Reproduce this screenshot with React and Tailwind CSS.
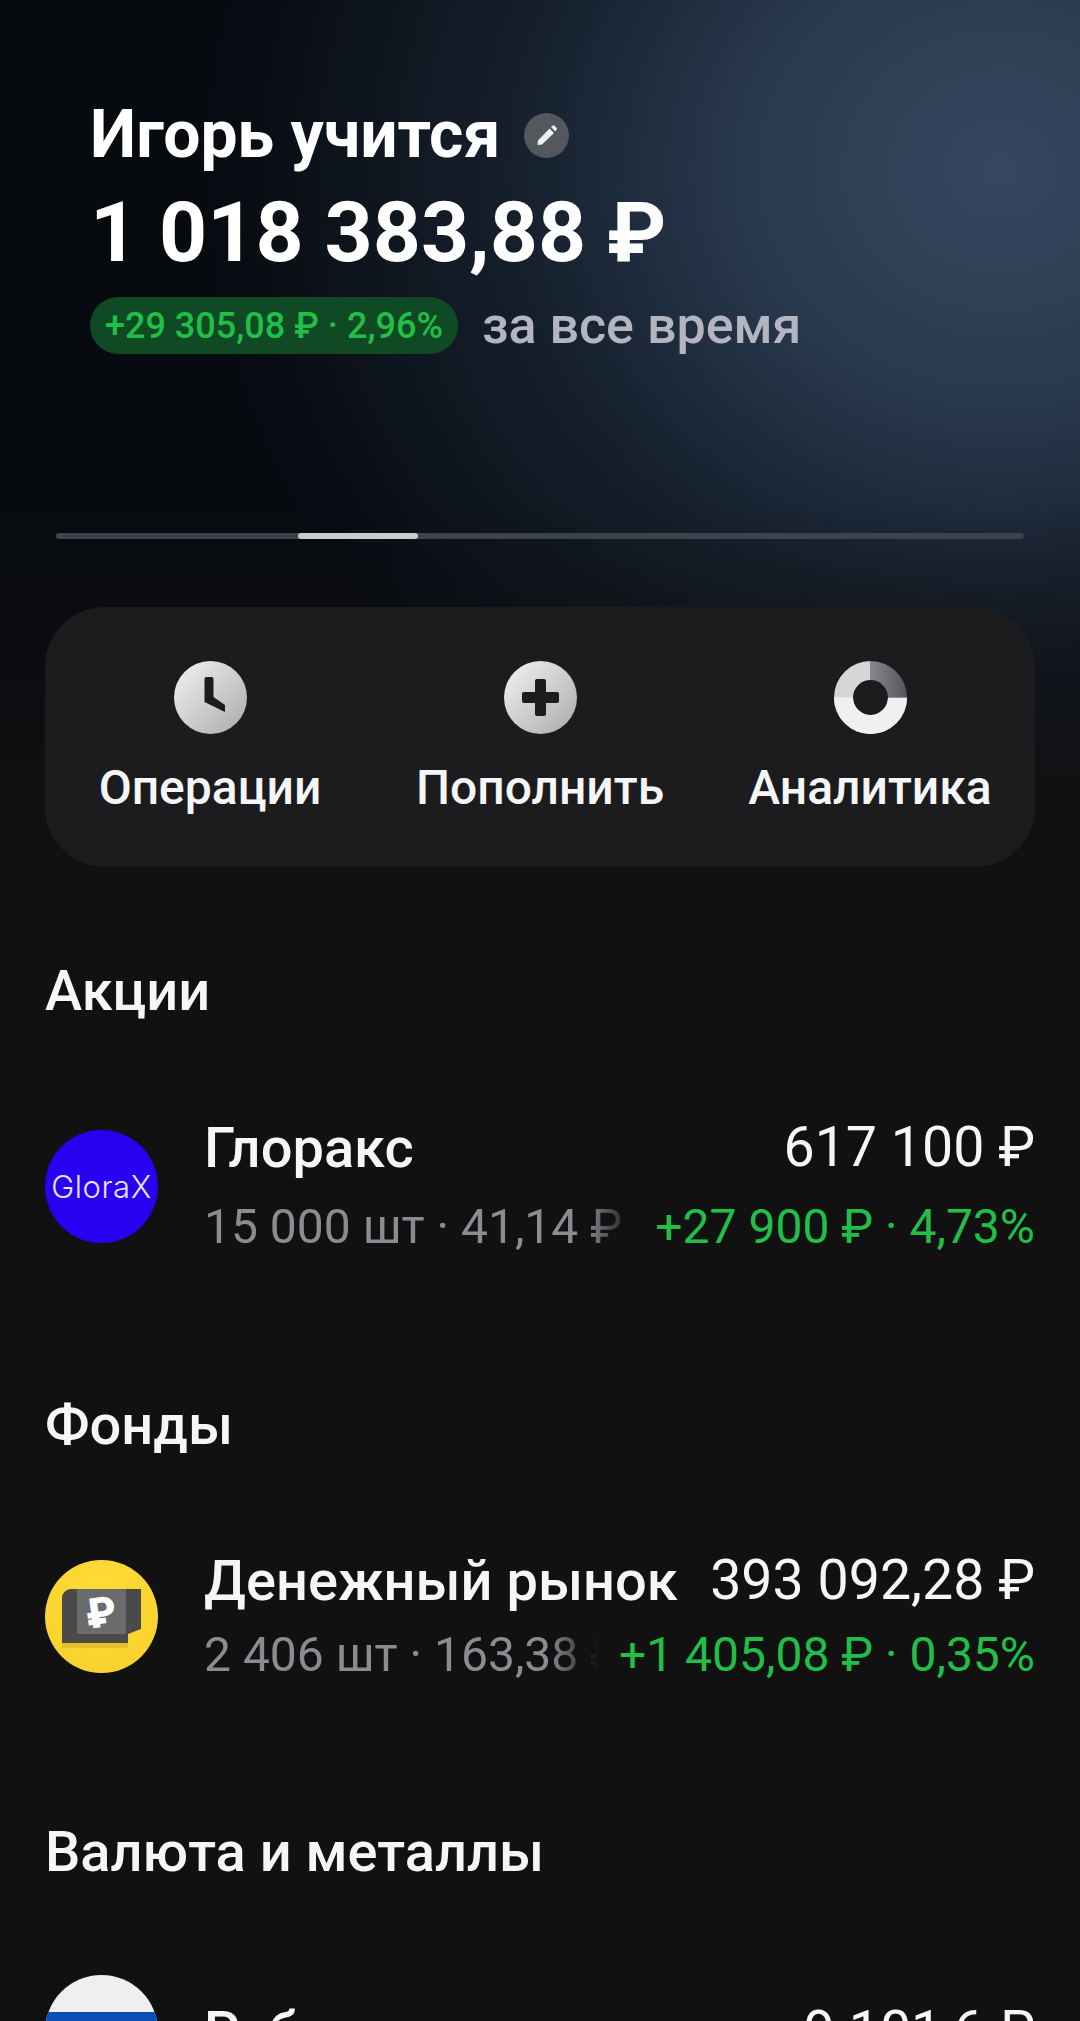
import React from 'react';

function PencilBadge() {
  return (
    <div className="w-[45px] h-[45px] rounded-full bg-[#54575e] flex items-center justify-center">
      <svg width="24" height="24" viewBox="0 0 24 24">
        <path d="M3 17.5 14.5 5.5l4.5 4.5L7 21.5l-4.6.6z" fill="#eceef0" />
        <path d="M16 4l1.5-1.2a1.5 1.5 0 0 1 2 0l2 2a1.5 1.5 0 0 1 0 2L20.400 8.500z" fill="#eceef0" />
      </svg>
    </div>
  );
}

function ClockIcon() {
  return (
    <svg width="73" height="73" viewBox="0 0 73 73">
      <defs>
        <linearGradient id="cg" x1="0" y1="0" x2="1" y2="1">
          <stop offset="0" stopColor="#f2f3f4" />
          <stop offset="1" stopColor="#a8aaad" />
        </linearGradient>
      </defs>
      <circle cx="36.5" cy="36.5" r="36.5" fill="url(#cg)" />
      <path d="M30.500 18q0-2 2-2h5q2 0 2 2v18l11.500 8v7l-20.500-10z" fill="#1c1c1e" />
    </svg>
  );
}

function PlusIcon() {
  return (
    <svg width="73" height="73" viewBox="0 0 73 73">
      <defs>
        <linearGradient id="pg" x1="0" y1="0" x2="1" y2="1">
          <stop offset="0" stopColor="#f2f3f4" />
          <stop offset="1" stopColor="#a8aaad" />
        </linearGradient>
      </defs>
      <circle cx="36.5" cy="36.5" r="36.5" fill="url(#pg)" />
      <rect x="31" y="18" width="11" height="37" rx="2" fill="#1c1c1e" />
      <rect x="18" y="31" width="37" height="11" rx="2" fill="#1c1c1e" />
    </svg>
  );
}

function DonutIcon() {
  return (
    <svg width="73" height="73" viewBox="0 0 73 73">
      <defs>
        <linearGradient id="dg" x1="0" y1="0" x2="1" y2="0">
          <stop offset="0" stopColor="#87888b" />
          <stop offset="1" stopColor="#55565a" />
        </linearGradient>
      </defs>
      <path d="M36.5 0A36.5 36.5 0 1 0 73 36.5H54A17.5 17.5 0 1 1 36.5 19z" fill="#d5d6d8" />
      <path d="M73 36.5A36.5 36.5 0 0 1 0 36.5h19a17.5 17.5 0 0 0 35 0z" fill="#eef0f1" />
      <path d="M36.5 0A36.5 36.5 0 0 1 73 36.5H54A17.5 17.5 0 0 0 36.5 19z" fill="url(#dg)" />
    </svg>
  );
}

function Action({ icon, label }) {
  return (
    <div className="flex flex-col items-center gap-[26px]">
      {icon}
      <div className="text-[48px] leading-[56px] font-medium text-[#f5f6f7] whitespace-nowrap">{label}</div>
    </div>
  );
}

function GloraxAvatar() {
  return (
    <div className="w-[113px] h-[113px] rounded-full bg-[#2a00f0] shrink-0 flex items-center justify-center">
      <span className="text-[31px] leading-none text-[#e8e4ff] tracking-[0.5px] font-light font-['Inter',sans-serif]">GloraX</span>
    </div>
  );
}

function FundAvatar() {
  return (
    <div className="w-[113px] h-[113px] rounded-full bg-[radial-gradient(circle_at_50%_30%,#ffdc38,#f8d02a)] shrink-0 relative overflow-hidden">
      <svg width="113" height="113" viewBox="0 0 113 113" className="absolute inset-0">
        <path d="M17 83h66v5H17z" fill="#b8931a" opacity="0.3" />
        <path d="M17 36q3-7 9-7H96V69l-13 5V83H17z" fill="#4a4a4a" />
        <rect x="32" y="29" width="49" height="45" fill="#6b6b6b" />
        <text x="56" y="67" textAnchor="middle" fontSize="42" fontWeight="900" fill="#fff" fontFamily="Roboto, sans-serif" transform="rotate(-8 56 52)">₽</text>
      </svg>
    </div>
  );
}

function RubAvatar() {
  return (
    <div className="w-[113px] h-[113px] rounded-full shrink-0 overflow-hidden bg-[#efefef]">
      <div className="h-[37px]" />
      <div className="h-[38px] bg-[#0a50b4]" />
      <div className="h-[38px] bg-[#d52b1e]" />
    </div>
  );
}

function AssetRow({ avatar, name, sub, price, delta, gapClass }) {
  return (
    <div className="flex items-center gap-[46px]">
      {avatar}
      <div className={`flex-1 min-w-0 flex flex-col ${gapClass}`}>
        <div className="flex justify-between gap-6 whitespace-nowrap">
          <span className="text-[56px] leading-[60px] font-medium text-[#f5f6f7]">{name}</span>
          <span className="text-[55.500px] leading-[60px] text-[#f5f6f7]">{price}</span>
        </div>
        {sub && (
          <div className="flex gap-[20px] whitespace-nowrap text-[48px] leading-[54px]">
            <span className="flex-1 min-w-0 overflow-hidden text-[#8b8c92] [mask-image:linear-gradient(to_left,transparent_0px,#000_50px)]">{sub}</span>
            <span className="text-[#21bf48] shrink-0">{delta}</span>
          </div>
        )}
      </div>
    </div>
  );
}

export default function App() {
  return (
    <div className="w-[1080px] h-[2021px] overflow-hidden bg-[#111112] font-['Roboto',sans-serif] bg-no-repeat bg-[linear-gradient(to_bottom,transparent_0px,transparent_500px,#111112_830px),radial-gradient(ellipse_800px_720px_at_1000px_170px,#35475f_0%,#2a3a50_30%,#151f2c_62%,#070a0f_100%)]">
      {/* hero */}
      <div className="pt-[93px] pl-[90px] pr-[56px]">
        <div className="flex items-center gap-[24px]">
          <h1 className="text-[66px] leading-[84px] font-bold text-white whitespace-nowrap">Игорь учится</h1>
          <PencilBadge />
        </div>
        <div className="text-[84px] leading-[100px] font-bold text-white mt-[6px] whitespace-nowrap">1 018 383,88 ₽</div>
        <div className="flex items-center gap-[24px] mt-[14px]">
          <span className="h-[57px] px-[15px] rounded-full bg-[#0f4a25] text-[#21bf48] text-[36px] font-medium flex items-center whitespace-nowrap">+29 305,08 ₽ · 2,96%</span>
          <span className="text-[52px] leading-[57px] font-medium text-[#b3b6c0] whitespace-nowrap">за все время</span>
        </div>
      </div>

      {/* slider */}
      <div className="mx-[56px] mt-[179px] h-[6px] rounded-full bg-[#3c434d] flex">
        <div className="ml-[242px] w-[120px] h-[6px] rounded-sm bg-[#c9cbce]" />
      </div>

      {/* actions */}
      <div className="mx-[45px] mt-[68px] h-[260px] rounded-[60px] bg-[#1c1c1e] grid grid-cols-3 pt-[54px]">
        <Action icon={<ClockIcon />} label="Операции" />
        <Action icon={<PlusIcon />} label="Пополнить" />
        <Action icon={<DonutIcon />} label="Аналитика" />
      </div>

      <div className="px-[45px]">
        <h2 className="mt-[94px] text-[56px] leading-[60px] font-medium text-[#f5f6f7]">Акции</h2>
        <div className="mt-[97px]">
          <AssetRow
            avatar={<GloraxAvatar />}
            name="Глоракс"
            sub="15 000 шт · 41,14 ₽"
            price="617 100 ₽"
            delta="+27 900 ₽ · 4,73%"
            gapClass="gap-[22px]"
          />
        </div>

        <h2 className="mt-[141px] text-[56px] leading-[60px] font-medium text-[#f5f6f7]">Фонды</h2>
        <div className="mt-[96px]">
          <AssetRow
            avatar={<FundAvatar />}
            name="Денежный рынок"
            sub="2 406 шт · 163,38 ₽"
            price="393 092,28 ₽"
            delta="+1 405,08 ₽ · 0,35%"
            gapClass="gap-[17px]"
          />
        </div>

        <h2 className="mt-[140px] text-[56px] leading-[60px] font-medium text-[#f5f6f7]">Валюта и металлы</h2>
        <div className="mt-[93px]">
          <AssetRow avatar={<RubAvatar />} name="Рубли" price="9 101,6 ₽" gapClass="" />
        </div>
      </div>
    </div>
  );
}
